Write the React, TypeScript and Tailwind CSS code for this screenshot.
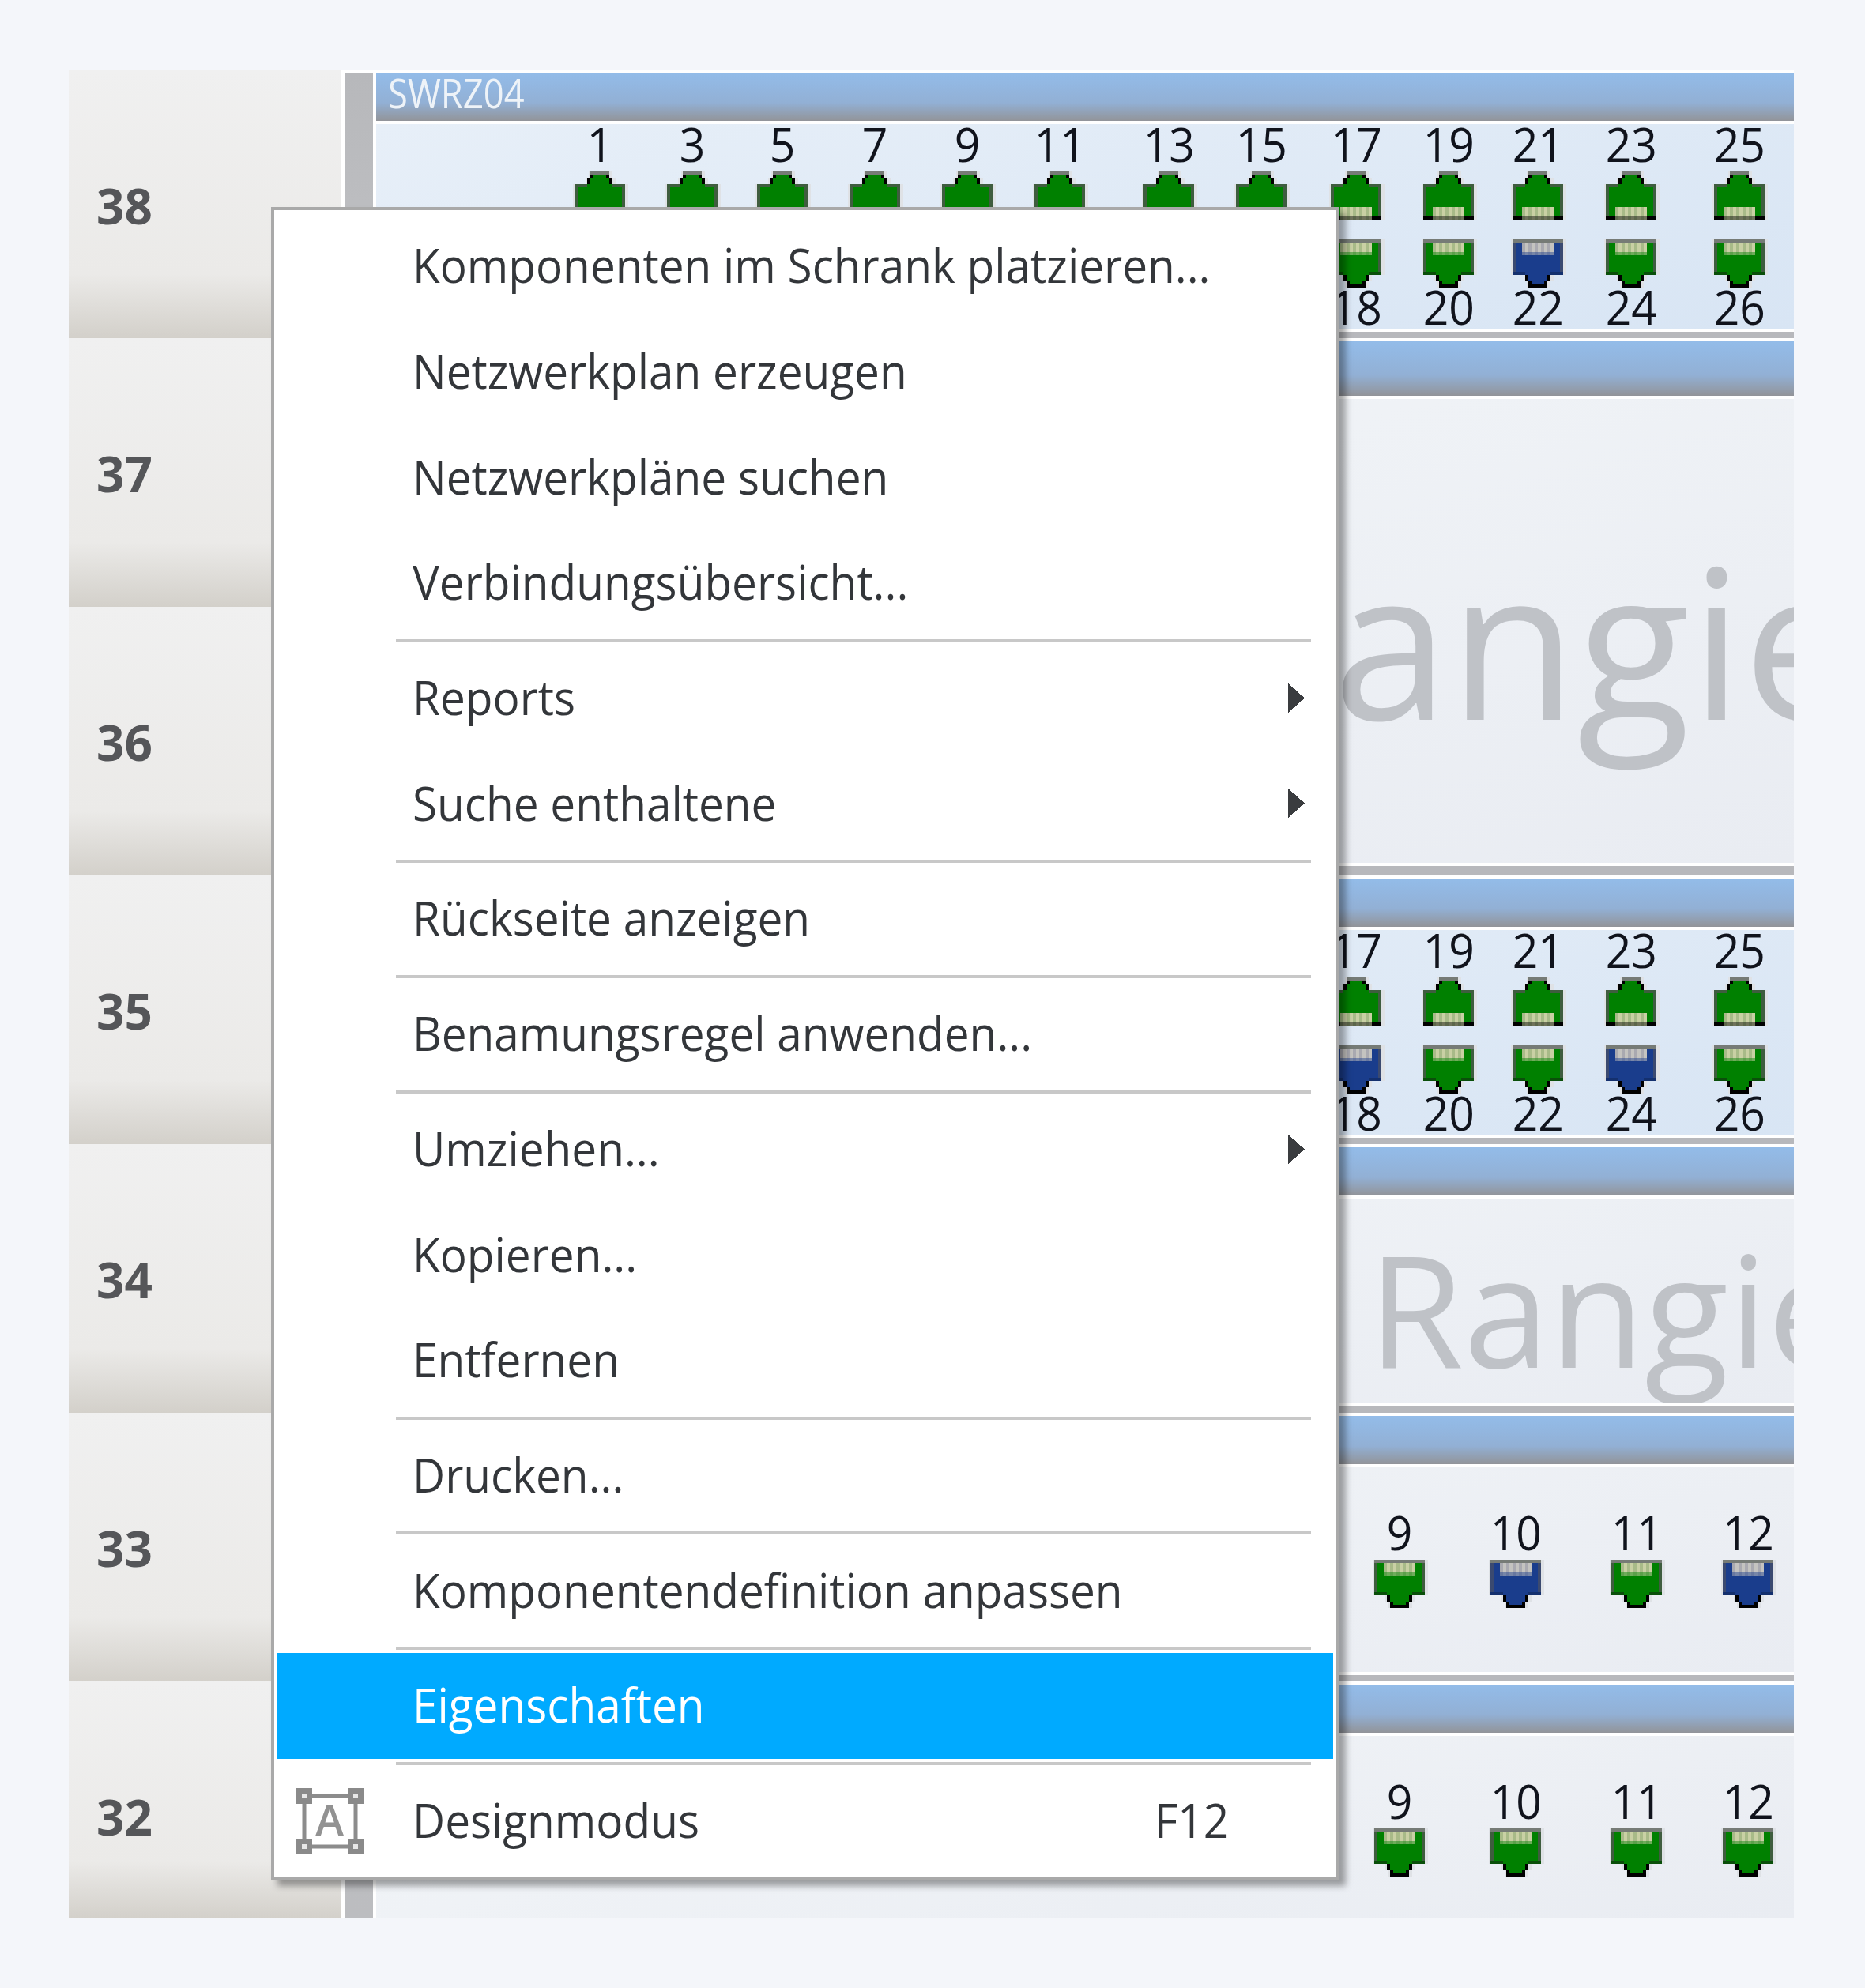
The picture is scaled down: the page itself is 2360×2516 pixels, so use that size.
import React from "react";

const FONT = "font-['Open_Sans','Noto_Sans',sans-serif]";

type PortColor = "green" | "blue";

const PALETTE = {
  green: { fill: "#008000", edge: "#3f5d3f", dark: "#0a4f0a", pinA: "#c9d0a4", pinB: "#a8ba88" },
  blue: { fill: "#1a3d8c", edge: "#3b4a70", dark: "#14306e", pinA: "#c4c3c0", pinB: "#a9a9b0" },
};

// 16x15 pixel rj45 socket, the reference is an upscaled bitmap
function Port({ color, down }: { color: PortColor; down?: boolean }) {
  const c = PALETTE[color];
  const spans = [
    [5, 10],
    [5, 10],
    [4, 11],
    [4, 11],
    [0, 15],
    [0, 15],
    [0, 15],
    [0, 15],
    [0, 15],
    [0, 15],
    [0, 15],
    [0, 15],
    [0, 15],
    [0, 15],
    [0, 15],
  ];
  const rows = down ? [...spans].reverse() : spans;
  const shoulderRow = down ? 10 : 4;
  const pinRows = down ? [1, 2, 3, 4] : [11, 12, 13, 14];

  return (
    <svg
      viewBox="0 0 16 15"
      preserveAspectRatio="none"
      className="block h-[61px] w-[64px] overflow-visible"
      shapeRendering="crispEdges"
    >
      {rows.map(([a, b], y) => {
        const first = y === 0;
        const last = y === 14;
        const w = b - a + 1;
        return (
          <g key={y}>
            <rect x={a - 0.6} y={y} width={w + 1.5} height={1} fill="#dfe2e6" />
            <rect x={a} y={y} width={w} height={1} fill={first ? "#767b76" : last ? "#000000" : c.fill} />
            {!first && !last && (
              <>
                <rect x={a} y={y} width={1} height={1} fill={w === 6 || w === 8 ? "#000000" : c.edge} />
                <rect x={b} y={y} width={1} height={1} fill={w === 6 || w === 8 ? "#000000" : c.edge} />
              </>
            )}
          </g>
        );
      })}
      <rect x={0} y={shoulderRow} width={4} height={1} fill={down ? c.dark : c.edge} />
      <rect x={12} y={shoulderRow} width={4} height={1} fill={down ? c.dark : c.edge} />
      {pinRows.map((y, i) =>
        [3, 4, 5, 6, 7, 8, 9, 10, 11, 12].map((x) => (
          <rect
            key={`${y}-${x}`}
            x={x}
            y={y}
            width={1}
            height={1}
            fill={x % 2 === 0 ? c.pinA : c.pinB}
            opacity={i === 3 ? 0.55 : 1}
          />
        )),
      )}
    </svg>
  );
}

function PortLabel({ n }: { n: number }) {
  return (
    <span className={`${FONT} block h-[46px] w-[64px] whitespace-nowrap text-center text-[60px] leading-[46px] text-[#10131c]`}>
      <span className={`inline-block origin-center scale-x-[0.95] ${n > 9 ? "-translate-x-[2px]" : ""}`}>{n}</span>
    </span>
  );
}

const CENTERS = [759, 876, 990, 1107, 1224, 1341, 1479, 1596, 1716, 1833, 1946, 2064, 2201];

// distance to the previous socket, 64 is the socket itself
function gapsFrom(centers: number[], start: number) {
  return centers.map((c, i) => (i === 0 ? c - 32 - start : c - centers[i - 1] - 64));
}

// columns or bottom sockets below the menu are left out, they never show
function PatchRow({ blue, origin, from = 0, bottomFrom = 0 }: { blue: number[]; origin: number; from?: number; bottomFrom?: number }) {
  const centers = CENTERS.slice(from);
  const gaps = gapsFrom(centers, origin);
  return (
    <div className="flex pt-[2px]">
      {centers.map((_, idx) => {
        const i = idx + from;
        const top = i * 2 + 1;
        const bottom = top + 1;
        return (
          <div key={top} className="flex w-[64px] flex-col items-center" style={{ marginLeft: gaps[idx] }}>
            <PortLabel n={top} />
            <div className="mt-[12px]">
              <Port color="green" />
            </div>
            {i >= bottomFrom && (
              <>
                <div className="mt-[25px]">
                  <Port color={blue.includes(bottom) ? "blue" : "green"} down />
                </div>
                <div className="mt-[1px]">
                  <PortLabel n={bottom} />
                </div>
              </>
            )}
          </div>
        );
      })}
    </div>
  );
}

const LOWER_CENTERS = [1771, 1918, 2071, 2212];

function LowerRow({ blue, origin }: { blue: number[]; origin: number }) {
  const gaps = gapsFrom(LOWER_CENTERS, origin);
  return (
    <div className="flex pt-[59px]">
      {LOWER_CENTERS.map((_, i) => {
        const n = i + 9;
        return (
          <div key={n} className="flex w-[64px] flex-col items-center" style={{ marginLeft: gaps[i] }}>
            <PortLabel n={n} />
            <div className="mt-[12px]">
              <Port color={blue.includes(n) ? "blue" : "green"} down />
            </div>
          </div>
        );
      })}
    </div>
  );
}

function Unit({ title, tall, last, children, tint }: { title?: string; tall?: boolean; last?: boolean; tint?: boolean; children?: React.ReactNode }) {
  return (
    <div className={`flex flex-col ${last ? "flex-1" : tall ? "h-[680px]" : "h-[340px]"}`}>
      <div
        className={`${tall ? "h-[69px]" : "h-[61px]"} shrink-0 bg-[linear-gradient(180deg,#93bce9_0%,#92b0d5_62%,#929499_100%)] pl-[15px]`}
      >
        {title && (
          <span className={`${FONT} inline-block origin-left scale-x-[0.89] text-[51px] leading-[50px] text-[#eef3f8]`}>{title}</span>
        )}
      </div>
      <div
        className={`mt-1 min-h-0 flex-1 overflow-hidden ${
          tint
            ? "bg-[linear-gradient(165deg,#e7eff8_0%,#d8e5f4_100%)]"
            : "bg-[linear-gradient(165deg,#f2f5f8_0%,#e9ecf2_100%)]"
        }`}
      >
        {children}
      </div>
      {!last && (
        <>
          <div className="h-1 shrink-0 bg-white" />
          <div className={`${tall ? "h-3" : "h-2"} shrink-0 bg-[#b7b8bc]`} />
          <div className="h-1 shrink-0 bg-white" />
        </>
      )}
    </div>
  );
}

function BlankLabel({ size, pad }: { size: "big" | "small"; pad: string }) {
  return (
    <div className={`${FONT} whitespace-nowrap text-[#bfc2c7] ${pad} ${size === "big" ? "text-[264px] leading-[608px]" : "text-[196px] leading-[276px]"}`}>
      Rangierfeld
    </div>
  );
}

const LEFT_ROWS = [
  { n: 38, h: "h-[339px]" },
  { n: 37, h: "h-[340px]" },
  { n: 36, h: "h-[340px]" },
  { n: 35, h: "h-[340px]" },
  { n: 34, h: "h-[340px]" },
  { n: 33, h: "h-[340px]" },
  { n: 32, h: "h-[300px]" },
];

type MenuEntry = { label: string; sub?: boolean; active?: boolean; key?: string; icon?: boolean };

const MENU: MenuEntry[][] = [
  [
    { label: "Komponenten im Schrank platzieren..." },
    { label: "Netzwerkplan erzeugen" },
    { label: "Netzwerkpläne suchen" },
    { label: "Verbindungsübersicht..." },
  ],
  [{ label: "Reports", sub: true }, { label: "Suche enthaltene", sub: true }],
  [{ label: "Rückseite anzeigen" }],
  [{ label: "Benamungsregel anwenden..." }],
  [{ label: "Umziehen...", sub: true }, { label: "Kopieren..." }, { label: "Entfernen" }],
  [{ label: "Drucken..." }],
  [{ label: "Komponentendefinition anpassen" }],
  [{ label: "Eigenschaften", active: true }],
  [{ label: "Designmodus", key: "F12", icon: true }],
];

function DesignIcon() {
  return (
    <svg viewBox="0 0 85 84" className="h-[84px] w-[85px]" fill="none">
      <rect x="10" y="10" width="65" height="64" stroke="#8c8c8c" strokeWidth="5" />
      <text x="42" y="60" textAnchor="middle" fontFamily="Open Sans, sans-serif" fontSize="54" fontWeight="600" fill="#929292">
        A
      </text>
      {[
        [0, 0],
        [65, 0],
        [0, 64],
        [65, 64],
      ].map(([x, y]) => (
        <g key={`${x}-${y}`}>
          <rect x={x} y={y} width="20" height="20" fill="#8a8a8a" />
          <rect x={x + 7} y={y + 7} width="6" height="6" fill="#e8e8e8" />
        </g>
      ))}
    </svg>
  );
}

function MenuItem({ item }: { item: MenuEntry }) {
  return (
    <div className={`relative mx-1 flex h-[133.7px] items-center pb-[3px] pr-1 ${item.active ? "bg-[#00aaff] text-white" : "text-[#33363a]"}`}>
      {item.icon && (
        <div className="absolute left-6 top-[25px]">
          <DesignIcon />
        </div>
      )}
      <span className="ml-[171px] inline-block origin-left scale-x-[0.945] whitespace-nowrap">{item.label}</span>
      {item.key && <span className="absolute left-[1110px] inline-block origin-left scale-x-[0.945]">{item.key}</span>}
      {item.sub && (
        <svg viewBox="0 0 21 37" className="absolute left-[1279px] top-[48px] h-[37px] w-[21px]" shapeRendering="crispEdges">
          <polygon points="0,0 21,18.5 0,37" fill="#3a3c3f" />
        </svg>
      )}
    </div>
  );
}

function ContextMenu() {
  return (
    <div
      className={`${FONT} absolute left-[343px] top-[262px] w-[1352px] border-4 border-[#a9a9a9] bg-white pt-1 pb-1 text-[60px] shadow-[8px_8px_8px_rgba(0,0,0,0.35)]`}
    >
      {MENU.map((group, i) => (
        <div key={i}>
          {i > 0 && (
            <div className="flex h-3 items-center pl-[154px] pr-[32px]">
              <div className="h-1 w-full bg-[#c8c8c8]" />
            </div>
          )}
          {group.map((item) => (
            <MenuItem key={item.label} item={item} />
          ))}
        </div>
      ))}
    </div>
  );
}

export default function App() {
  return (
    <div className="relative h-[2516px] w-[2360px] overflow-hidden bg-[#f4f6fa] pl-[87px] pt-[89px]">
      <div className="flex h-[2338px] w-[2183px] overflow-hidden bg-white">
        <div className="w-[345px] shrink-0">
          {LEFT_ROWS.map((row) => (
            <div
              key={row.n}
              className={`${row.h} bg-[linear-gradient(180deg,#f0f0f0_0%,#ebeae8_76%,#d3d0ca_100%)] pl-[35px] pt-[141px]`}
            >
              <span className={`${FONT} block text-[62px] font-bold leading-[60px] text-[#555659]`}>{row.n}</span>
            </div>
          ))}
        </div>
        <div className="ml-1 mt-[3px] w-9 shrink-0 bg-[linear-gradient(180deg,#b7b8bb_0%,#c5c6c9_20%,#bcbdc0_100%)]" />
        <div className="ml-1 mt-[3px] flex w-[1794px] flex-col">
          <Unit title="SWRZ04" tint>
            <PatchRow blue={[22]} origin={476} bottomFrom={8} />
          </Unit>
          <Unit tall>
            <BlankLabel size="big" pad="pl-[1048px]" />
          </Unit>
          <Unit tint>
            <PatchRow blue={[18, 24]} origin={476} from={8} />
          </Unit>
          <Unit>
            <BlankLabel size="small" pad="pl-[1255px]" />
          </Unit>
          <Unit>
            <LowerRow blue={[10, 12]} origin={476} />
          </Unit>
          <Unit last>
            <LowerRow blue={[]} origin={476} />
          </Unit>
        </div>
      </div>
      <ContextMenu />
    </div>
  );
}
